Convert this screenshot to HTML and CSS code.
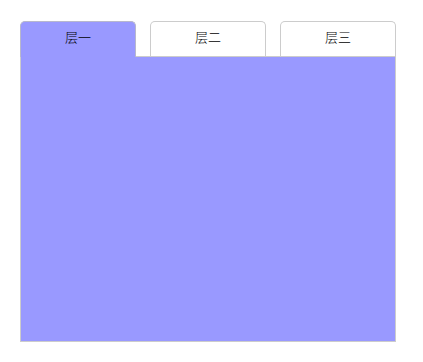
FILE: index.html
```html
<!DOCTYPE html>
<html>
<head>
<meta charset="utf-8">
<link rel="stylesheet" href="styles.css">
</head>
<body>
<div class="wrap">
  <div class="tabs">
    <div class="tab active">层一</div>
    <div class="tab">层二</div>
    <div class="tab">层三</div>
  </div>
  <div class="panel"></div>
</div>
</body>
</html>
```
FILE: styles.css
```css
html, body {
  margin: 0;
  padding: 0;
  background: #fff;
}
.wrap {
  padding: 21px 0 0 20px;
  width: 376px;
  font-family: "Noto Sans CJK SC", "Noto Sans", sans-serif;
  font-size: 13px;
  font-weight: 300;
  color: #000;
}
.tabs {
  display: flex;
  gap: 14px;
  height: 35px;
}
.tab {
  box-sizing: border-box;
  width: 116px;
  height: 35px;
  border: 1px solid #ccc;
  border-bottom: none;
  border-radius: 5px 5px 0 0;
  background: #fff;
  text-align: center;
  line-height: 29px;
}
.tab.active {
  height: 36px;
  background: #9999ff;
  border-color: #b8b8cc;
  position: relative;
  z-index: 1;
}
.panel {
  box-sizing: border-box;
  height: 286px;
  background: #9999ff;
  border: 1px solid #ccc;
}
```
